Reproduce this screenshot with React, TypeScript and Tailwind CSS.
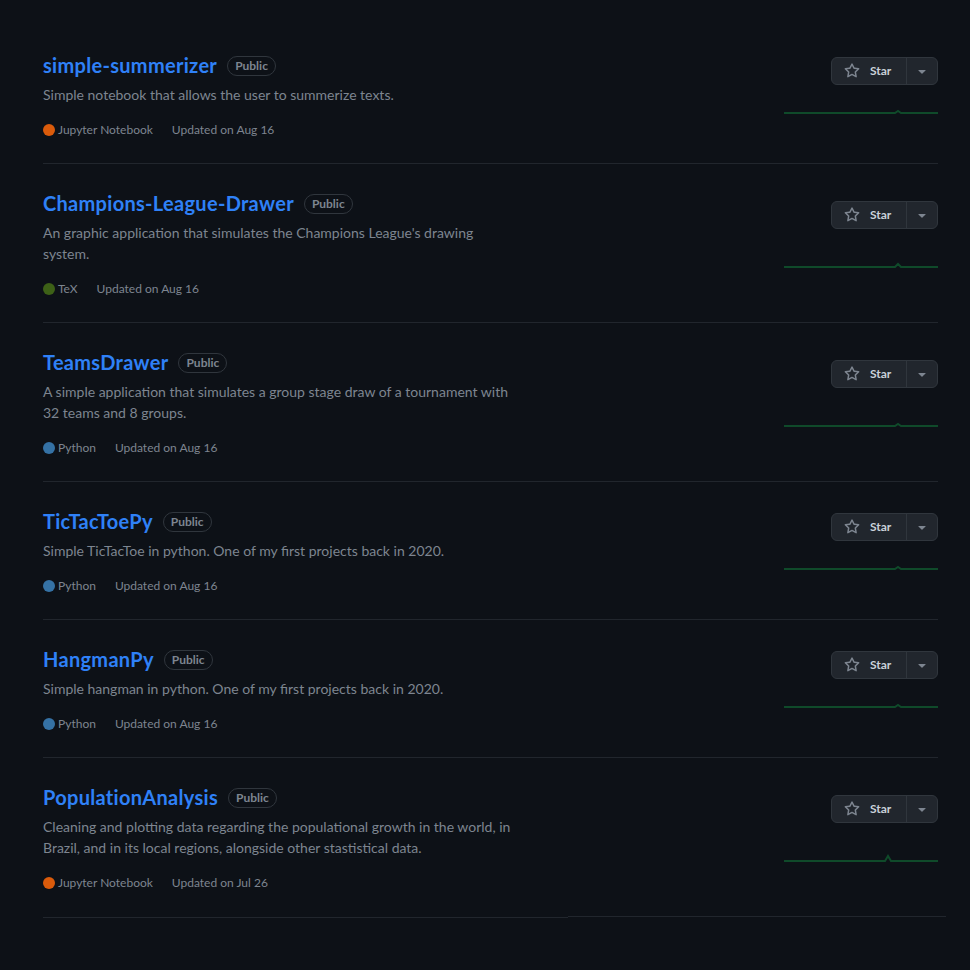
// Repository list — dark GitHub-style repo rows with star button and activity sparkline.

type Repo = {
  name: string
  description: string
  language: string
  color: string
  updated: string
  bump: number
  bumpHeight: number
}

const repos: Repo[] = [
  {
    name: 'simple-summerizer',
    description: 'Simple notebook that allows the user to summerize texts.',
    language: 'Jupyter Notebook',
    color: '#da5b0b',
    updated: 'Aug 16',
    bump: 114,
    bumpHeight: 2,
  },
  {
    name: 'Champions-League-Drawer',
    description: "An graphic application that simulates the Champions League's drawing system.",
    language: 'TeX',
    color: '#3d6117',
    updated: 'Aug 16',
    bump: 114,
    bumpHeight: 3,
  },
  {
    name: 'TeamsDrawer',
    description:
      'A simple application that simulates a group stage draw of a tournament with 32 teams and 8 groups.',
    language: 'Python',
    color: '#3572a5',
    updated: 'Aug 16',
    bump: 114,
    bumpHeight: 2,
  },
  {
    name: 'TicTacToePy',
    description: 'Simple TicTacToe in python. One of my first projects back in 2020.',
    language: 'Python',
    color: '#3572a5',
    updated: 'Aug 16',
    bump: 114,
    bumpHeight: 2,
  },
  {
    name: 'HangmanPy',
    description: 'Simple hangman in python. One of my first projects back in 2020.',
    language: 'Python',
    color: '#3572a5',
    updated: 'Aug 16',
    bump: 114,
    bumpHeight: 2,
  },
  {
    name: 'PopulationAnalysis',
    description:
      'Cleaning and plotting data regarding the populational growth in the world, in Brazil, and in its local regions, alongside other stastistical data.',
    language: 'Jupyter Notebook',
    color: '#da5b0b',
    updated: 'Jul 26',
    bump: 104,
    bumpHeight: 5,
  },
]

function StarIcon() {
  return (
    <svg width="16" height="16" viewBox="0 0 16 16" fill="#7d8590">
      <path d="M8 .25a.75.75 0 0 1 .673.418l1.882 3.815 4.21.612a.75.75 0 0 1 .416 1.279l-3.046 2.97.719 4.192a.751.751 0 0 1-1.088.791L8 12.347l-3.766 1.98a.75.75 0 0 1-1.088-.79l.72-4.194L.818 6.374a.75.75 0 0 1 .416-1.28l4.21-.611L7.327.668A.75.75 0 0 1 8 .25Zm0 2.445L6.615 5.5a.75.75 0 0 1-.564.41l-3.097.45 2.24 2.184a.75.75 0 0 1 .216.664l-.528 3.084 2.769-1.456a.75.75 0 0 1 .698 0l2.77 1.456-.53-3.084a.75.75 0 0 1 .216-.664l2.24-2.183-3.096-.45a.75.75 0 0 1-.564-.41L8 2.694Z" />
    </svg>
  )
}

function TriangleDown() {
  return (
    <svg width="16" height="16" viewBox="0 0 16 16" fill="#7d8590">
      <path d="m4.427 7.427 3.396 3.396a.25.25 0 0 0 .354 0l3.396-3.396A.25.25 0 0 0 11.396 7H4.604a.25.25 0 0 0-.177.427Z" />
    </svg>
  )
}

function Sparkline({ bump, height }: { bump: number; height: number }) {
  const y = 13
  const d = `M0 ${y} L${bump - 3} ${y} L${bump} ${y - height} L${bump + 3} ${y} L154 ${y}`
  return (
    <svg width="154" height="32" viewBox="0 0 154 32" className="block">
      <path d={d} fill="none" stroke="#0f4a2a" strokeWidth="2" />
    </svg>
  )
}

function RepoRow({ repo, first }: { repo: Repo; first: boolean }) {
  return (
    <div className={`flex justify-between py-6 ${first ? '' : 'border-t border-[#21262d]'}`}>
      <div className="flex flex-col">
        <div className="flex items-center h-[30px]">
          <a className="text-[20px] font-bold tracking-[0.3px] text-[#2f81f7] leading-[30px]">{repo.name}</a>
          <span className="ml-[10px] mt-[2px] rounded-full border border-[#30363d] px-[7px] text-[12px] font-bold leading-[18px] text-[#7d8590]">
            Public
          </span>
        </div>
        <p className="mt-1 w-[472px] text-[14px] leading-[21px] text-[#7d8590]">{repo.description}</p>
        <div className="mt-4 flex items-center text-[12px] leading-[18px] text-[#7d8590]">
          <span className="mr-[3px] inline-block h-3 w-3 rounded-full" style={{ backgroundColor: repo.color }} />
          <span className="mr-[19px]">{repo.language}</span>
          <span>Updated on {repo.updated}</span>
        </div>
      </div>
      <div className="flex flex-col items-end justify-around">
        <div className="flex h-7 rounded-md border border-[#30363d] bg-[#21262d]">
          <button className="flex w-[74px] items-center gap-[10px] pl-[12px] text-[12px] font-bold text-[#c9d1d9]">
            <StarIcon />
            <span>Star</span>
          </button>
          <button className="flex w-[31px] items-center justify-center border-l border-[#30363d]">
            <TriangleDown />
          </button>
        </div>
        <Sparkline bump={repo.bump} height={repo.bumpHeight} />
      </div>
    </div>
  )
}

export default function App() {
  return (
    <div
      className="min-h-[970px] bg-[#0d1117] pt-[26px] pl-[43px] pr-[32px]"
      style={{ fontFamily: 'Lato, "Noto Sans", sans-serif' }}
    >
      <div className="w-[895px]">
        {repos.map((repo, i) => (
          <RepoRow key={repo.name} repo={repo} first={i === 0} />
        ))}
        <div className="flex w-[903px]">
          <div className="h-px w-[525px] translate-y-px bg-[#21262d]" />
          <div className="h-px flex-1 bg-[#21262d]" />
        </div>
      </div>
    </div>
  )
}
